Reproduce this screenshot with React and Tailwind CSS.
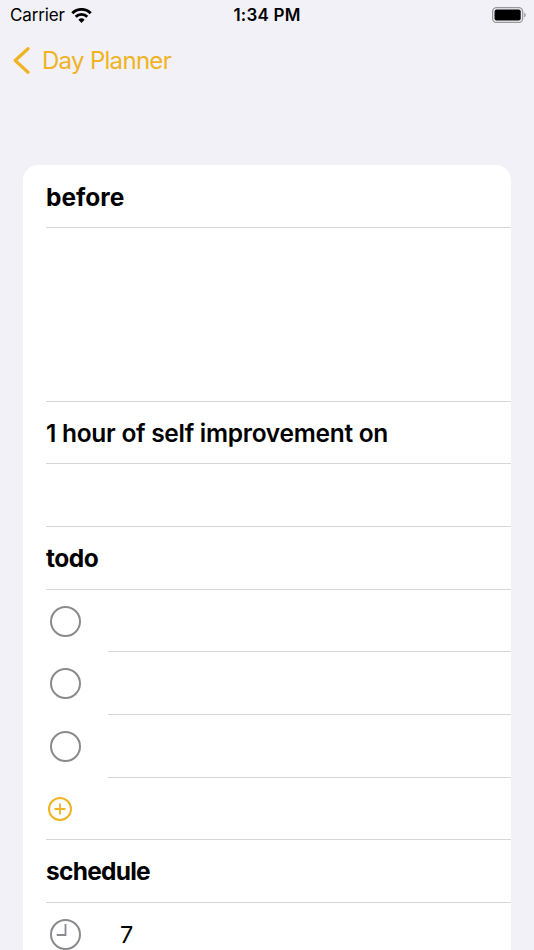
/* eslint-disable react/prop-types */
const StatusBar = () => (
  <div className="grid h-[30px] grid-cols-3 items-center px-2 text-[17px] leading-[30px] text-black">
    <div className="flex items-center gap-[6px] pl-[2px]">
      <span className="tracking-[-0.15px]">Carrier</span>
      <svg className="h-[15px] w-[21px]" viewBox="0 0 21 15" fill="none">
        <path d="M1.3 5.2a13 13 0 0 1 18.4 0" stroke="black" strokeWidth="2.9" />
        <path d="M4.7 8.7a8.2 8.2 0 0 1 11.6 0" stroke="black" strokeWidth="2.8" />
        <path d="M10.5 15 7.4 11.8a4.5 4.5 0 0 1 6.2 0Z" fill="black" />
      </svg>
    </div>
    <span className="text-center font-semibold tracking-[0.2px]">1:34 PM</span>
    <div className="flex justify-end">
      <svg className="h-4 w-[34px]" viewBox="0 0 34 16" fill="none">
        <rect x="0.6" y="0.6" width="30" height="14.8" rx="4" stroke="#98989b" strokeWidth="1.3" />
        <rect x="2.5" y="2.5" width="26.2" height="11" rx="2" fill="black" />
        <path d="M32.2 5.5v5a2.8 2.8 0 0 0 0-5Z" fill="#98989b" />
      </svg>
    </div>
  </div>
);

const NavBar = () => (
  <div className="flex h-[61px] items-center gap-3 pl-[13px] text-[#f0b323]">
    <svg className="h-[27px] w-[17px]" viewBox="0 0 17 27" fill="none">
      <path
        d="M15 1.8 2.2 13.5 15 25.2"
        stroke="currentColor"
        strokeWidth="3.2"
        strokeLinecap="round"
        strokeLinejoin="round"
      />
    </svg>
    <span className="text-[24px] tracking-[-0.7px]">Day Planner</span>
  </div>
);

const Row = ({ className = "h-[63px]", children }) => (
  <div className={`flex items-center border-b border-[#d6d6d8] ${className}`}>
    {children}
  </div>
);

const TodoRow = ({ className = "h-[63px]" }) => (
  <div className={`flex items-stretch ${className}`}>
    <div className="flex w-[62px] items-center pl-1">
      <div className="h-[31px] w-[31px] rounded-full border-2 border-[#8a8a8e]" />
    </div>
    <div className="flex-1 border-b border-[#d6d6d8]" />
  </div>
);

const App = () => {
  return (
    <div className="h-[950px] overflow-hidden bg-[#f2f1f7] font-['Inter',sans-serif]">
      <StatusBar />
      <NavBar />
      <div className="mx-[23px] mt-[74px] rounded-t-[15px] bg-white pl-[23px] text-[24.5px] text-black">
        <Row>
          <h2 className="pt-[2px] font-bold tracking-[0px]">before</h2>
        </Row>
        <Row className="h-[174px]" />
        <Row className="h-[62px]">
          <h2 className="pt-[2px] font-semibold tracking-[-0.28px]">
            1 hour of self improvement on
          </h2>
        </Row>
        <Row />
        <Row>
          <h2 className="font-bold tracking-[-0.45px]">todo</h2>
        </Row>
        <TodoRow className="h-[62px]" />
        <TodoRow />
        <TodoRow />
        <Row className="h-[62px]">
          <svg className="ml-[2px] h-6 w-6" viewBox="0 0 24 24" fill="none">
            <circle cx="12" cy="12" r="11" stroke="#f0b323" strokeWidth="2" />
            <path d="M12 7.2v9.6M7.2 12h9.6" stroke="#f0b323" strokeWidth="1.8" strokeLinecap="round" />
          </svg>
        </Row>
        <Row>
          <h2 className="pt-px font-bold tracking-[-0.75px]">schedule</h2>
        </Row>
        <Row>
          <svg className="ml-1 h-[31px] w-[31px]" viewBox="0 0 31 31" fill="none">
            <circle cx="15.5" cy="15.5" r="14.5" stroke="#8a8a8e" strokeWidth="2" />
            <path d="M15.5 5v11H6.8" stroke="#8a8a8e" strokeWidth="1.8" />
          </svg>
          <span className="ml-[39px] pt-[2px] text-[23.5px]">7</span>
        </Row>
      </div>
    </div>
  );
};

export default App;
